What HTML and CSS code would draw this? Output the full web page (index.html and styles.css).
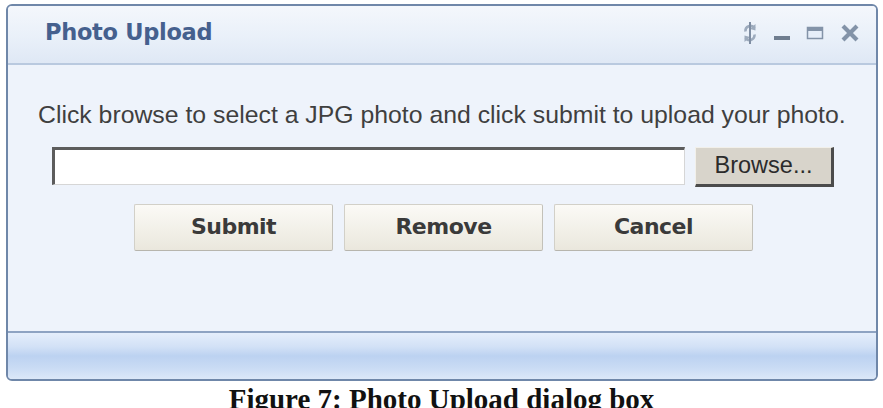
FILE: index.html
```html
<!DOCTYPE html>
<html lang="en">
  <head>
    <meta charset="UTF-8" />
    <meta name="viewport" content="width=device-width, initial-scale=1.0" />
    <title>Photo Upload</title>

    <link rel="stylesheet" href="styles.css">
  </head>

  <body>
    <div class="dialog">
      <div class="dialog-title">
        <h1>Photo Upload</h1>
        <div class="tools">
          <!-- refresh -->
          <svg width="16" height="24" viewBox="0 0 16 24">
            <path d="M12.5 7 A5 5 0 0 0 3.5 10.5" fill="none" stroke="#9dabbd" stroke-width="2.6"/>
            <path d="M3.5 17 A5 5 0 0 0 12.5 13.5" fill="none" stroke="#9dabbd" stroke-width="2.6"/>
            <path d="M13.5 3 L13.5 9.5 L8 8 Z" fill="#9dabbd"/>
            <path d="M2.5 21 L2.5 14.5 L8 16 Z" fill="#9dabbd"/>
            <rect x="7" y="1" width="2" height="22" fill="#7f8ea3"/>
          </svg>
          <!-- minimize -->
          <svg width="16" height="22" viewBox="0 0 16 22">
            <rect x="0" y="14" width="16" height="4" fill="#6f7d8f"/>
          </svg>
          <!-- maximize -->
          <svg width="18" height="22" viewBox="0 0 18 22">
            <rect x="1.5" y="5.5" width="15" height="11" fill="#e6eef9" stroke="#8393a8" stroke-width="1.5"/>
            <rect x="1" y="5" width="16" height="4" fill="#8393a8"/>
          </svg>
          <!-- close -->
          <svg width="20" height="22" viewBox="0 0 20 22">
            <path d="M3 4 L17 18 M17 4 L3 18" stroke="#8393a8" stroke-width="4.2"/>
          </svg>
        </div>
      </div>

      <div class="dialog-body">
        <p class="hint">Click browse to select a JPG photo and click submit to upload your photo.</p>
        <div class="file-row">
          <input class="file-input" type="text" />
          <button class="browse-button">Browse...</button>
        </div>
        <div class="actions">
          <button class="action">Submit</button>
          <button class="action">Remove</button>
          <button class="action">Cancel</button>
        </div>
      </div>

      <div class="dialog-footer"></div>
    </div>

    <p class="caption">Figure 7: Photo Upload dialog box</p>
  </body>
</html>
```

FILE: styles.css
```css
body {
  margin: 0;
  background: #fff;
  font-family: 'Liberation Sans', Arial, sans-serif;
  overflow: hidden;
}

.dialog {
  margin: 4px 5px 0 6px;
  width: 872px;
  height: 377px;
  box-sizing: border-box;
  border: 2px solid #6f87a9;
  border-radius: 6px;
  display: flex;
  flex-direction: column;
  overflow: hidden;
  background: #eef3fb;
}

.dialog-title {
  height: 59px;
  box-sizing: border-box;
  display: flex;
  align-items: center;
  justify-content: space-between;
  padding: 0 16px 0 37px;
  background: linear-gradient(180deg, #f4f7fc 0%, #e9f0f9 55%, #dfe8f5 100%);
  border-bottom: 2px solid #b9c9df;
}

.dialog-title h1 {
  margin: 0 0 6px 0;
  font-family: 'DejaVu Sans', Verdana, sans-serif;
  font-size: 22.5px;
  font-weight: bold;
  color: #45608e;
  letter-spacing: -0.3px;
}

.tools {
  display: flex;
  align-items: center;
  gap: 16px;
  margin-bottom: 4px;
}

.dialog-body {
  flex: 1;
  padding: 0 0 0 44px;
}

.hint {
  margin: 36px 0 0 -14px;
  font-size: 24.8px;
  color: #3f3f3f;
  white-space: nowrap;
}

.file-row {
  display: flex;
  align-items: flex-start;
  gap: 10px;
  margin-top: 18px;
}

.file-input {
  width: 633px;
  height: 38px;
  box-sizing: border-box;
  margin: 0;
  border-style: solid;
  border-width: 3px 1px 1px 3px;
  border-color: #5c5c5c #d6d6d6 #d6d6d6 #5c5c5c;
  background: #fff;
  outline: none;
}

.browse-button {
  width: 139px;
  height: 40px;
  box-sizing: border-box;
  margin: 0;
  padding: 0 0 2px 0;
  border-style: solid;
  border-width: 1px 3px 3px 1px;
  border-color: #f2f0ea #4b4b4b #4b4b4b #f2f0ea;
  background: #d8d4cb;
  font-family: 'Liberation Sans', Arial, sans-serif;
  font-size: 23.5px;
  color: #2b2b2b;
}

.actions {
  display: flex;
  gap: 11px;
  margin: 17px 0 0 82px;
}

.action {
  width: 199px;
  height: 47px;
  box-sizing: border-box;
  margin: 0;
  padding: 0 0 2px 0;
  border: 1px solid #d2d0c8;
  border-bottom-color: #b7b5ad;
  border-right-color: #c3c1b9;
  border-radius: 2px;
  background: linear-gradient(180deg, #fbfaf6 0%, #f1efe7 60%, #eae7dd 100%);
  font-family: 'DejaVu Sans', Verdana, sans-serif;
  font-size: 22px;
  font-weight: bold;
  color: #3a3a3a;
  letter-spacing: -0.5px;
}

.dialog-footer {
  height: 48px;
  border-top: 2px solid #8ea3c2;
  box-sizing: border-box;
  background: linear-gradient(180deg, #e5eefb 0%, #d2e1f6 30%, #bcd2f1 50%, #c9dbf4 75%, #dce8f8 100%);
}

.caption {
  margin: 4px 0 0 0;
  text-align: center;
  font-family: 'Liberation Serif', 'Times New Roman', serif;
  font-size: 29px;
  line-height: 29px;
  font-weight: bold;
  color: #111;
}
```
